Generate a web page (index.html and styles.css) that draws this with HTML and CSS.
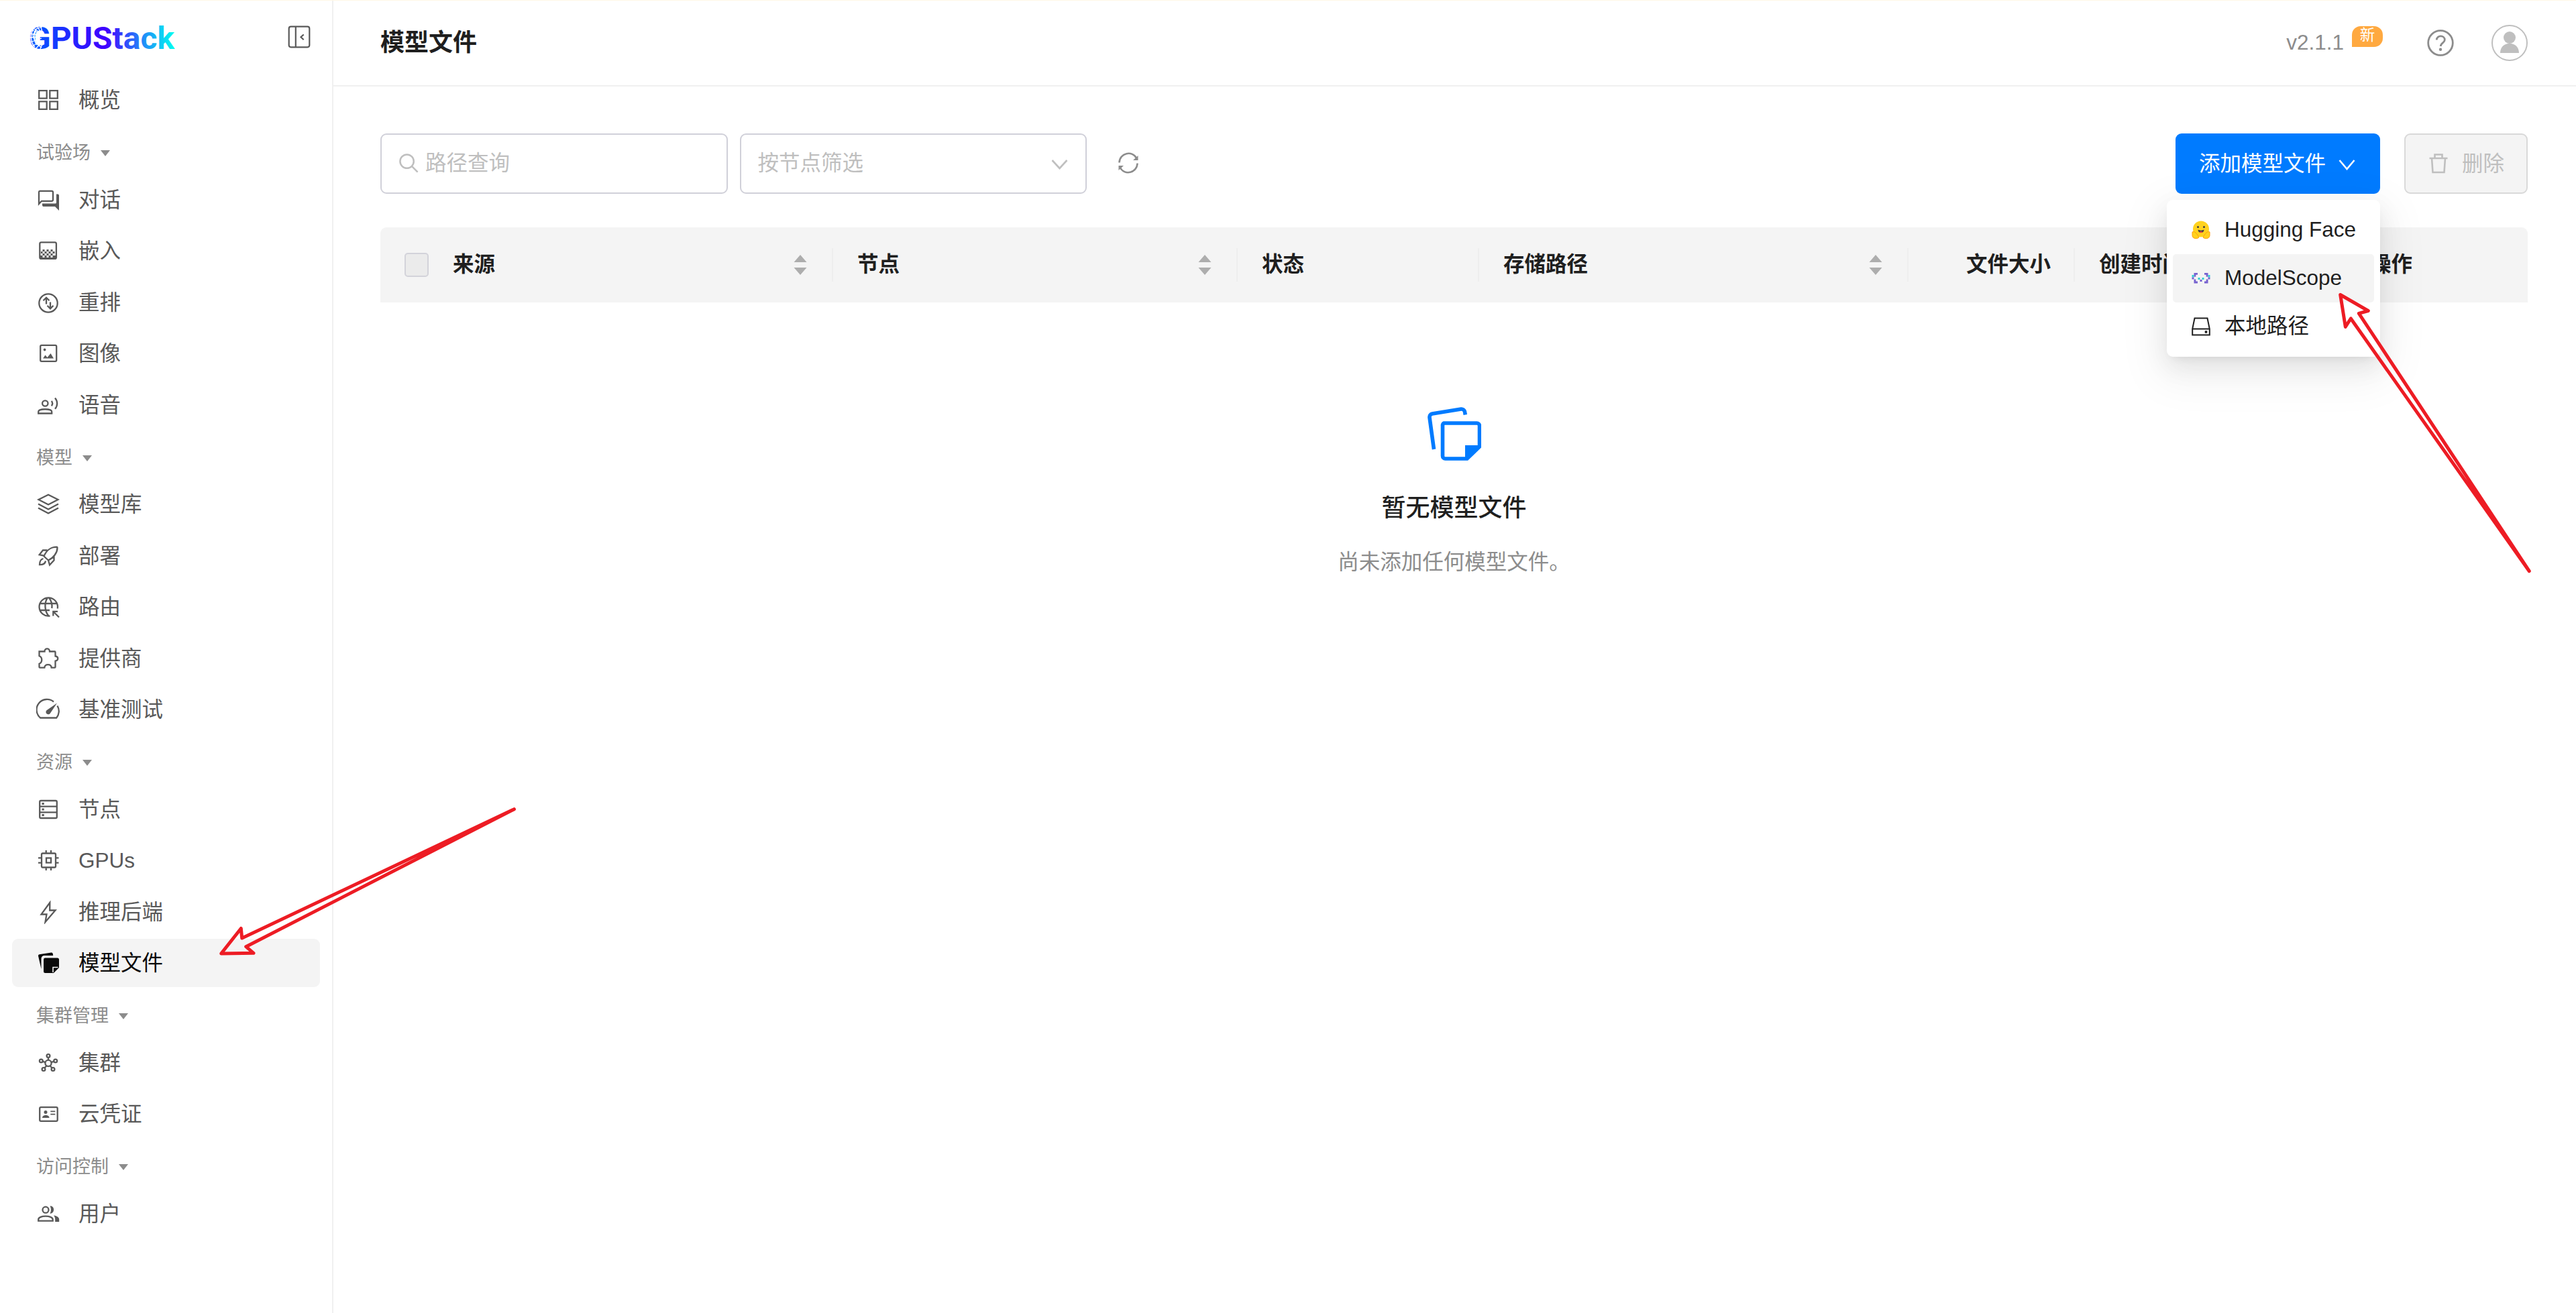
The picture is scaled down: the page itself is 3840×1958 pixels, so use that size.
FILE: index.html
```html
<!DOCTYPE html>
<html lang="zh-CN">

<head>
    <meta charset="UTF-8">
    <meta name="viewport" content="width=device-width, initial-scale=1.0">
    <title>模型文件 - GPUStack</title>
    <link rel="stylesheet" href="styles.css">
</head>

<body>
    <aside class="sider">
        <div class="sider-header">
            <svg class="logo" viewBox="0 0 216 44">
                <defs>
                    <linearGradient id="logo-gradient" gradientUnits="userSpaceOnUse" x1="0" y1="0" x2="216" y2="0">
                        <stop offset="0" stop-color="#0062ff" />
                        <stop offset="0.22" stop-color="#1a30ff" />
                        <stop offset="0.52" stop-color="#4000ff" />
                        <stop offset="0.72" stop-color="#2a6cfa" />
                        <stop offset="1" stop-color="#00fff0" />
                    </linearGradient>
                </defs>
                <text class="logo-text" x="-2" y="38.500" textLength="217" lengthAdjust="spacingAndGlyphs" fill="url(#logo-gradient)">GPUStack</text>
                <!-- mesh over the left half of the G -->
                <g class="logo-mesh">
                    <path d="M0 10l19 7M-1 16l17 3M-1 22l16-1M0 29l17-6M3 35l13-8M8 39l10-11M14 41l5-11M3 7l14 9M9 3l8 13M15 2l3 12" />
                    <path d="M5 9c-5 8-5 20 2 27M9 11c-4 7-4 15 1 22M18 6l-9 3-5 10 4 11 9 7" />
                </g>
            </svg>
            <svg class="collapse-icon" viewBox="0 0 36 36">
                <rect x="2.700" y="2.700" width="30.600" height="30.600" rx="3" />
                <path d="M12.800 3v30M24.700 14.500L20.500 18.300l4.200 4" />
            </svg>
        </div>

        <nav class="menu">
            <a class="menu-item">
                <svg class="icon" viewBox="0 0 36 36"><path d="M4.200 4.200h11.500v11.500H4.200zM20.300 4.200h11.500v11.500H20.300zM4.200 20.300h11.500v11.500H4.200zM20.300 20.300h11.500v11.500H20.300z" /></svg>
                <span>概览</span>
            </a>

            <div class="menu-group">试验场<i class="caret"></i></div>
            <a class="menu-item">
                <svg class="icon" viewBox="0 0 36 36">
                    <path d="M5.500 4.800h17.500a2 2 0 0 1 2 2v11a2 2 0 0 1-2 2H8l-4 4.300V6.500a1.700 1.700 0 0 1 1.500-1.700z" />
                    <path class="fill" d="M30 9.500h2a2 2 0 0 1 2 2V34l-6-6H10.500a2 2 0 0 1-1.500-2v-2.500h19.500a1.500 1.500 0 0 0 1.500-1.500z" />
                </svg>
                <span>对话</span>
            </a>
            <a class="menu-item">
                <svg class="icon" viewBox="0 0 36 36">
                    <rect x="5.300" y="5.300" width="24.600" height="24.600" rx="2.200" />
                    <path class="fill" d="M9.500 16h3v3h-3zM15.500 16h3v3h-3zM21.500 16h3v3h-3zM7 19h2.500v3H7zM12.500 19h3v3h-3zM18.500 19h3v3h-3zM24.500 19h3v3h-3zM9.500 22h3v3h-3zM15.500 22h3v3h-3zM21.500 22h3v3h-3zM6 25h3.500v3H6zM12.500 25h3v3h-3zM18.500 25h3v3h-3zM24.500 25h5v3h-5zM6 28h24v2H6z" />
                </svg>
                <span>嵌入</span>
            </a>
            <a class="menu-item">
                <svg class="icon" viewBox="0 0 36 36">
                    <circle cx="18" cy="19" r="13.700" />
                    <path d="M15 20.500V11.500M10.500 15.300L15 10.800l4.500 4.500M21 17.500v9.500M16.500 22.800l4.500 4.500 4.500-4.500" />
                </svg>
                <span>重排</span>
            </a>
            <a class="menu-item">
                <svg class="icon" viewBox="0 0 36 36">
                    <rect x="6.200" y="5.800" width="24" height="24" rx="1.800" />
                    <circle class="fill" cx="12.600" cy="12.500" r="1.900" />
                    <path class="fill" d="M10 25.500l3.500-5 3 3.500 5-6 4.500 7.500z" />
                </svg>
                <span>图像</span>
            </a>
            <a class="menu-item">
                <svg class="icon" viewBox="0 0 36 36">
                    <circle cx="13.300" cy="15.500" r="4.200" />
                    <path d="M3.200 30.500v-2.500c0-5 20-5 20 0v2.500zM22.800 12c1.700 2.200 1.700 5 0 7.200M28 7.500c4.200 4.800 4.200 11.500 0 16.300" />
                </svg>
                <span>语音</span>
            </a>

            <div class="menu-group">模型<i class="caret"></i></div>
            <a class="menu-item">
                <svg class="icon" viewBox="0 0 36 36"><path d="M3.500 11L18 3.700 32.500 11 18 18.500zM3 17.500L18 25.500l15-8M3 23.500l15 8 15-8" /></svg>
                <span>模型库</span>
            </a>
            <a class="menu-item">
                <svg class="icon" viewBox="0 0 36 36">
                    <path d="M11.500 18.500C15 10 22 4.700 30.500 4.700c.8 0 1 .3 1 1C31.500 13 26 21 18 24.500zM16.500 9.500H10L4.700 16.200l6.500 1.500M26.500 18v6.500L20 31.500l-1.800-6.500M10.500 22c-4 1-5.500 4-5.500 9.200 5 0 8.500-2 9-5.700" />
                </svg>
                <span>部署</span>
            </a>
            <a class="menu-item">
                <svg class="icon" viewBox="0 0 36 36">
                    <path d="M20.500 31.500A13.700 13.700 0 1 1 31.700 20.500M17 4.500c-5 6.500-5 19.500 1.500 27M19 4.500c3.800 4.500 5 10 4.300 15.500M5 13h26M5 23h15M34 33.500L26 25.500M25.300 31.500v-6.700H32" />
                </svg>
                <span>路由</span>
            </a>
            <a class="menu-item">
                <svg class="icon" viewBox="0 0 36 36">
                    <path d="M4.500 7.500h8c0-5.500 7.500-5.500 7.500 0h7.500a1 1 0 0 1 1 1v6c5 .5 5 6.500 0 7.200v9a1 1 0 0 1-1 1h-4.800c-.5-6-9.700-6-10.400 0H5.500a1 1 0 0 1-1-1v-5c5-2 5-9.500 0-11.500z" />
                </svg>
                <span>提供商</span>
            </a>
            <a class="menu-item">
                <svg class="icon" viewBox="0 0 36 36">
                    <path d="M26 6.500A15.500 15.500 0 0 0 6.200 30.500h24A15.500 15.500 0 0 0 31.500 12.500" />
                    <path class="fill" d="M31 8.500L21 23.500a3.500 3.500 0 1 1-5.500-4.200z" />
                </svg>
                <span>基准测试</span>
            </a>

            <div class="menu-group">资源<i class="caret"></i></div>
            <a class="menu-item">
                <svg class="icon" viewBox="0 0 36 36">
                    <rect x="5.200" y="5" width="25.600" height="26" rx="1.800" />
                    <path d="M5 13.700h26M5 22.300h26" />
                    <path class="fill" d="M8.500 8h3.200v3H8.500zM8.500 16.500h3.200v3H8.500zM8.500 25h3.200v3H8.500z" />
                </svg>
                <span>节点</span>
            </a>
            <a class="menu-item">
                <svg class="icon" viewBox="0 0 36 36">
                    <rect x="8" y="7.500" width="21" height="21" rx="1.800" />
                    <rect x="15" y="14.500" width="7" height="7" />
                    <path d="M14.700 3v4M22 3v4M14.700 29v4M22 29v4M3 14.300h4M3 21.700h4M29.500 14.300h4M29.500 21.700h4" />
                </svg>
                <span>GPUs</span>
            </a>
            <a class="menu-item">
                <svg class="icon" viewBox="0 0 36 36"><path d="M20.300 4L7.500 21.500h8L13.500 33 28.500 15.500h-8.300z" /></svg>
                <span>推理后端</span>
            </a>
            <a class="menu-item active">
                <svg class="icon" viewBox="0 0 36 36">
                    <path class="fill" d="M3 7.500a2 2 0 0 1 1.500-2.200L22.500 2.500a2 2 0 0 1 2.200 1.600l.5 2.900H12a4.500 4.500 0 0 0-4.500 4.500V27z" />
                    <path class="fill" d="M13 10.500h18.500a2.500 2.500 0 0 1 2.500 2.500v12l-8 8H13.500a2.500 2.500 0 0 1-2.500-2.500V13a2.500 2.500 0 0 1 2-2.500z" />
                    <path class="fold" d="M25 32v-7.500h7.500" />
                </svg>
                <span>模型文件</span>
            </a>

            <div class="menu-group">集群管理<i class="caret"></i></div>
            <a class="menu-item">
                <svg class="icon" viewBox="0 0 36 36">
                    <circle cx="18" cy="18.500" r="4.600" />
                    <circle cx="18" cy="7.500" r="2.400" />
                    <circle cx="7.300" cy="15" r="2.400" />
                    <circle cx="28.700" cy="15" r="2.400" />
                    <circle cx="11" cy="27.500" r="2.400" />
                    <circle cx="25" cy="27.500" r="2.400" />
                    <path d="M18 10v4M9.700 15.800l4 1.300M26.300 15.800l-4 1.300M12.500 25.500l3-3.300M23.500 25.500l-3-3.300" />
                </svg>
                <span>集群</span>
            </a>
            <a class="menu-item">
                <svg class="icon" viewBox="0 0 36 36">
                    <rect x="5.200" y="8.200" width="26.500" height="20.600" rx="1.800" />
                    <circle class="fill" cx="14" cy="15.500" r="2.500" />
                    <path class="fill" d="M9 24c0-5.300 10.500-5.300 10.500 0z" />
                    <path class="thin" d="M21.300 14.300h7M21.300 18.700h7" />
                </svg>
                <span>云凭证</span>
            </a>

            <div class="menu-group">访问控制<i class="caret"></i></div>
            <a class="menu-item">
                <svg class="icon" viewBox="0 0 36 36">
                    <circle cx="14" cy="12.200" r="4.500" />
                    <path d="M3.200 28.700v-2c0-6.700 21.500-6.700 21.500 0v2z" />
                    <path class="fill" d="M20.500 6.600c7.500-1 7.500 11.800 0 11 2-3 2-8 0-11zM26 20.500c5 .8 8.200 2.800 8.200 6v3.500h-6v-3.500c0-2.500-.7-4.300-2.200-6z" />
                </svg>
                <span>用户</span>
            </a>
        </nav>
    </aside>

    <main class="main">
        <header class="header">
            <h1>模型文件</h1>
            <div class="header-right">
                <div class="version">v2.1.1<span class="badge-new">新</span></div>
                <svg class="help-icon" viewBox="0 0 40 40">
                    <circle cx="20" cy="20" r="18.300" />
                    <path d="M14.300 15.500c0-7.500 12-7.300 12 0 0 4.500-6 4.500-6 9.500" />
                    <circle class="dot" cx="20" cy="29.700" r="2.200" />
                </svg>
                <svg class="avatar" viewBox="0 0 54 54">
                    <circle class="ring" cx="27" cy="27" r="26" />
                    <circle cx="27" cy="19" r="9" />
                    <path d="M13 42c0-19 28-19 28 0z" />
                </svg>
            </div>
        </header>

        <section class="content">
            <div class="toolbar">
                <div class="field">
                    <svg class="search-icon" viewBox="0 0 32 32"><circle cx="13" cy="13" r="10.500" /><path d="M20.500 20.500L29.500 29.500" /></svg>
                    <span>路径查询</span>
                </div>
                <div class="field select">
                    <span>按节点筛选</span>
                    <svg class="chevron" viewBox="0 0 27 27"><path d="M2.500 8l11 12 11-12" /></svg>
                </div>
                <svg class="refresh-icon" viewBox="0 0 32 32">
                    <path d="M2.500 15.500C3 1 22-3.500 28.500 9.500M29.500 16.500C29 31 10 35.500 3.500 22.500" />
                    <path class="fill" d="M30.500 5v7h-7.500zM1.500 27v-7H9z" />
                </svg>
                <div class="actions">
                    <div class="dropdown">
                        <button class="btn btn-primary">
                            添加模型文件
                            <svg class="chevron" viewBox="0 0 27 27"><path d="M2.500 7l11 13 11-13" /></svg>
                        </button>
                        <ul class="dropdown-menu">
                            <li>
                                <svg viewBox="0 0 28 28">
                                    <circle cx="14" cy="12.500" r="12" fill="#ffd21e" />
                                    <path d="M1 17c3-2 7 2 10 8-3 3-10 2-10-3zM27 17c-3-2-7 2-10 8 3 3 10 2 10-3z" fill="#ffd21e" stroke="#ff9d0b" stroke-width="1" />
                                    <circle cx="9.500" cy="9.500" r="1.500" fill="#3a3b45" />
                                    <circle cx="18.500" cy="9.500" r="1.500" fill="#3a3b45" />
                                    <path d="M9.500 13.500c3 1.500 6 1.500 9 0 0 6-9 6-9 0z" fill="#3a3b45" />
                                    <path d="M11.500 17c1.500-1.500 3.500-1.500 5 0-1 1.500-4 1.500-5 0z" fill="#f94040" />
                                </svg>
                                <span>Hugging Face</span>
                            </li>
                            <li class="hover">
                                <svg viewBox="0 0 28 28">
                                    <path d="M3.500 6H9v2.800H6.300v3H3.500zM24.500 6H19v2.800h2.700v3h2.800zM3.500 15.500h2.800v3H9v3H3.500zM24.500 15.500h-2.800v3H19v3h5.500zM12.500 16h3v3h-3z" fill="#7661cf" />
                                    <path d="M.5 9h3v3.500h-3zM24.500 9h3v3.500h-3zM9.500 13h3v3h-3zM15.500 13h3v3h-3z" fill="#36cfd1" />
                                    <path d="M.5 12.500h3v3h-3zM24.500 12.500h3v3h-3z" fill="#7661cf" />
                                </svg>
                                <span>ModelScope</span>
                            </li>
                            <li>
                                <svg class="disk" viewBox="0 0 28 28">
                                    <path d="M1.200 17.500L4.500 1.500h19l3.300 16V26.500H1.200zM1.200 17.500h25.600" />
                                    <circle cx="21.500" cy="22" r="1" />
                                </svg>
                                <span>本地路径</span>
                            </li>
                        </ul>
                    </div>
                    <button class="btn btn-disabled">
                        <svg viewBox="0 0 30 32"><path d="M1.500 8h27M5 8l1.500 21h17L25 8M9.500 7.500V2.500h11v5" /></svg>
                        删除
                    </button>
                </div>
            </div>

            <div class="table-head">
                <div class="cell-check"><i class="checkbox"></i></div>
                <div class="cell divider">来源<svg class="sorter" viewBox="0 0 20 32"><path d="M10 1l9.500 11H.5zM10 31l9.500-11H.5z" /></svg></div>
                <div class="cell divider">节点<svg class="sorter" viewBox="0 0 20 32"><path d="M10 1l9.500 11H.5zM10 31l9.500-11H.5z" /></svg></div>
                <div class="cell divider">状态</div>
                <div class="cell divider">存储路径<svg class="sorter" viewBox="0 0 20 32"><path d="M10 1l9.500 11H.5zM10 31l9.500-11H.5z" /></svg></div>
                <div class="cell cell-right divider">文件大小</div>
                <div class="cell">创建时间</div>
                <div class="cell">操作</div>
            </div>

            <div class="empty">
                <svg class="empty-icon" viewBox="0 0 80 80">
                    <path d="M9.500 63L3 15.500a5 5 0 0 1 4-5.500L50 3a5 5 0 0 1 5.500 4l.8 4.500" />
                    <path d="M24.500 24h49a4 4 0 0 1 4 4v31L59 77H26.500a4 4 0 0 1-4-4V28a4 4 0 0 1 2-4z" />
                    <path class="fill" d="M56 57h23L58 79h-2z" />
                </svg>
                <h2>暂无模型文件</h2>
                <p>尚未添加任何模型文件。</p>
            </div>
        </section>
    </main>

    <!-- hint arrows -->
    <svg class="arrows" viewBox="0 0 3840 1958">
        <path d="M329.700 1422L359.300 1384.500 360.700 1399 766.500 1206.700 366.700 1411.700 378 1421.300z" />
        <path d="M3488.700 439.500L3530.300 463.500 3516.300 467.300 3770.300 851.700 3504.300 475 3496.300 487.300z" />
    </svg>
</body>

</html>
```

FILE: styles.css
```css
* {
    box-sizing: border-box;
}

html, body {
    height: 100%;
    margin: 0;
    padding: 0;
}

body {
    display: flex;
    overflow: hidden;
    border-top: 1px solid #fff7e6;
    background: #fff;
    color: #1f1f1f;
    font-family: "Liberation Sans", "Noto Sans CJK SC", sans-serif;
    font-size: 31.5px;
    line-height: 50px;
}

h1, h2, p, ul {
    margin: 0;
    padding: 0;
}

svg {
    flex: none;
    fill: none;
}

/* Sidebar */
.sider {
    width: 497px;
    flex: none;
    padding: 0 18px;
    border-right: 2px solid #f0f0f0;
}

.sider-header {
    display: flex;
    justify-content: space-between;
    height: 112px;
    padding: 33px 13px 0 27px;
}

.logo {
    width: 216px;
    height: 44px;
    overflow: visible;
}

.logo-text {
    font-family: Roboto, sans-serif;
    font-size: 46px;
    font-weight: 700;
}

.logo-mesh {
    stroke: #fff;
    stroke-width: 1.3;
}

.collapse-icon {
    width: 36px;
    height: 36px;
    margin-top: 3px;
    stroke: #595959;
    stroke-width: 2.2;
}

.menu-item {
    display: flex;
    align-items: center;
    gap: 27px;
    height: 72px;
    margin-bottom: 4.5px;
    padding: 0 36px;
    border-radius: 9px;
    color: #595959;
}

.menu-item.active {
    background: #f4f4f4;
    color: #0a0a0a;
}

.menu-group {
    display: flex;
    align-items: center;
    gap: 15px;
    height: 67.5px;
    margin-bottom: 4.5px;
    padding: 10px 36px 0;
    color: #8c8c8c;
    font-size: 27px;
}

.caret {
    margin-top: 1px;
    border: 7.5px solid transparent;
    border-top: 9px solid #8c8c8c;
    border-bottom: 0;
}

.icon {
    width: 36px;
    height: 36px;
    stroke: currentColor;
    stroke-width: 2.3;
}

.icon .fill {
    fill: currentColor;
    stroke: none;
}

.icon .thin {
    stroke-width: 1.8;
}

.icon .fold {
    stroke: #f4f4f4;
    stroke-width: 1.6;
}

/* Header */
.main {
    flex: 1;
}

.header {
    display: flex;
    align-items: center;
    justify-content: space-between;
    height: 128px;
    padding: 0 72px 0 70px;
    border-bottom: 2px solid #f0f0f0;
}

.header h1 {
    font-size: 36px;
    font-weight: 700;
}

.header-right {
    display: flex;
    align-items: center;
    color: #8c8c8c;
}

.version {
    display: flex;
    margin: -2px 66px 0 0;
}

.badge-new {
    width: 46px;
    height: 31px;
    margin: 1px 0 0 12px;
    border-radius: 13px 13px 13px 0;
    background: #ffa940;
    color: #fff;
    font-size: 22.5px;
    line-height: 28px;
    text-align: center;
}

.help-icon {
    width: 40px;
    height: 40px;
    margin-right: 56px;
    stroke: #8c8c8c;
    stroke-width: 2.8;
}

.help-icon .dot {
    fill: #8c8c8c;
    stroke: none;
}

.avatar {
    width: 54px;
    height: 54px;
    fill: #bfbfbf;
}

.avatar .ring {
    fill: none;
    stroke: #bfbfbf;
    stroke-width: 2;
}

/* Toolbar */
.content {
    padding: 70px 72px 0 70px;
}

.toolbar {
    display: flex;
    align-items: center;
    gap: 18px;
    height: 90px;
}

.field {
    display: flex;
    align-items: center;
    gap: 9px;
    width: 517.5px;
    height: 90px;
    padding: 0 25px 2px;
    border: 2px solid #d0d0d9;
    border-radius: 9px;
    color: #bfbfbf;
}

.select {
    justify-content: space-between;
}

.search-icon {
    width: 31px;
    height: 31px;
    stroke: #bfbfbf;
    stroke-width: 2.6;
}

.chevron {
    width: 27px;
    height: 27px;
    margin-top: 2px;
    stroke: currentColor;
    stroke-width: 2.6;
}

.refresh-icon {
    width: 32px;
    height: 32px;
    margin: -2px 0 0 28px;
    stroke: #8c8c8c;
    stroke-width: 2.6;
}

.refresh-icon .fill {
    fill: #8c8c8c;
    stroke: none;
}

.actions {
    display: flex;
    gap: 36px;
    margin-left: auto;
}

.dropdown {
    position: relative;
}

.btn {
    display: flex;
    align-items: center;
    height: 90px;
    border-radius: 9px;
    font: inherit;
    white-space: nowrap;
}

.btn-primary {
    gap: 18px;
    width: 305px;
    padding: 0 35px;
    border: 0;
    background: #007bff;
    color: #fff;
}

.btn-disabled {
    gap: 20px;
    width: 184px;
    padding: 0 34px 1px;
    border: 2px solid #d9d9d9;
    background: #f4f4f4;
    color: #bfbfbf;
}

.btn-disabled svg {
    width: 30px;
    height: 32px;
    stroke: #bfbfbf;
    stroke-width: 2.6;
}

.dropdown-menu {
    position: absolute;
    top: 99px;
    right: 0;
    z-index: 1;
    width: 318px;
    padding: 9px;
    border-radius: 9px;
    background: #fff;
    box-shadow: 0 14px 36px rgba(0, 0, 0, 0.08), 0 7px 14px -9px rgba(0, 0, 0, 0.12), 0 20px 63px 18px rgba(0, 0, 0, 0.05);
    list-style: none;
}

.dropdown-menu li {
    display: flex;
    align-items: center;
    gap: 21px;
    height: 72px;
    padding-left: 28px;
    border-radius: 5px;
    white-space: nowrap;
}

.dropdown-menu li.hover {
    background: #f4f4f4;
}

.dropdown-menu span {
    margin-top: -3px;
}

.dropdown-menu svg {
    width: 28px;
    height: 28px;
}

.dropdown-menu .disk {
    stroke: #1f1f1f;
    stroke-width: 2;
}

/* Table */
.table-head {
    display: grid;
    grid-template-columns: 72px 603px 603px 360px 640px 248px 404px 271px;
    height: 112px;
    margin-top: 50px;
    border-radius: 9px 9px 0 0;
    background: #f4f4f4;
    font-weight: 700;
}

.cell-check {
    display: flex;
    align-items: center;
    padding-left: 36px;
}

.checkbox {
    width: 36px;
    height: 36px;
    border: 2px solid #d3d3da;
    border-radius: 5px;
    background: #ebebeb;
}

.cell {
    display: flex;
    align-items: center;
    padding: 0 36px 3px;
}

.cell-right {
    justify-content: flex-end;
}

.divider {
    background: linear-gradient(#eee, #eee) right center / 2px 50px no-repeat;
}

.sorter {
    width: 20px;
    height: 32px;
    margin: 3px 3px 0 auto;
    fill: #adadad;
}

/* Empty state */
.empty {
    display: flex;
    flex-direction: column;
    align-items: center;
    padding-top: 156px;
}

.empty-icon {
    width: 80px;
    height: 80px;
    stroke: #007bff;
    stroke-width: 5.6;
}

.empty-icon .fill {
    fill: #007bff;
    stroke: none;
}

.empty h2 {
    margin-top: 46px;
    font-size: 36px;
    font-weight: 500;
}

.empty p {
    margin-top: 30px;
    color: #8c8c8c;
}

.arrows {
    position: absolute;
    top: 0;
    left: 0;
    z-index: 2;
    width: 3840px;
    height: 1958px;
    stroke: #ed1c24;
    stroke-width: 5;
    stroke-linejoin: round;
    pointer-events: none;
}
```
